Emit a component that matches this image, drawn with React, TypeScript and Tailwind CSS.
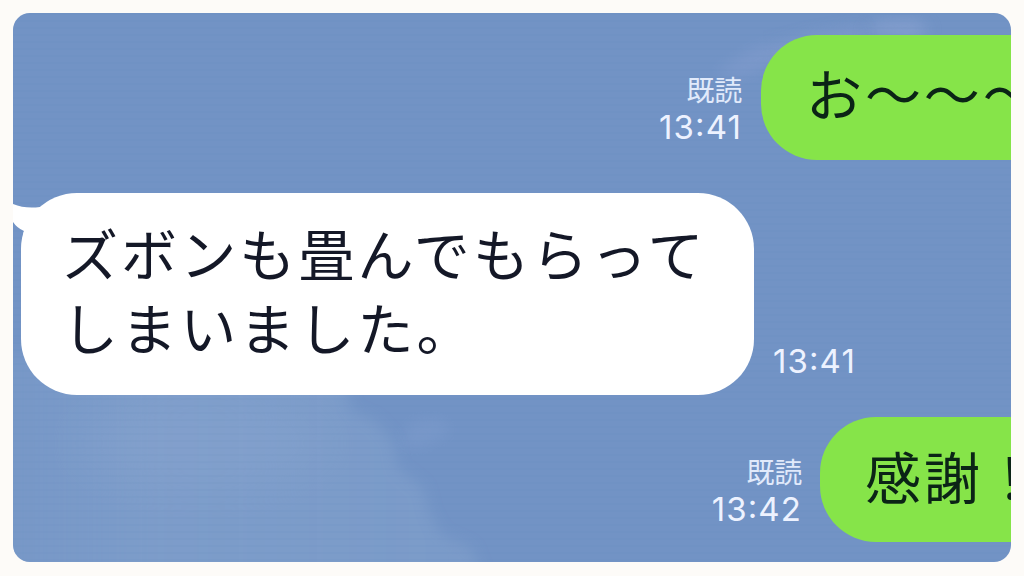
import type { ReactNode } from 'react';

const jp = "font-['Noto_Sans_CJK_JP',sans-serif]";

function Clouds() {
  return (
    <svg className="absolute inset-0 h-full w-full" viewBox="0 0 998 549" preserveAspectRatio="none" aria-hidden="true">
      <defs>
        <filter id="soft" x="-20%" y="-20%" width="140%" height="140%">
          <feGaussianBlur stdDeviation="7" />
        </filter>
        <filter id="softer" x="-40%" y="-60%" width="180%" height="220%">
          <feGaussianBlur stdDeviation="26" />
        </filter>
        <linearGradient id="haze" x1="0" y1="0" x2="1" y2="0">
          <stop offset="0" stopColor="#84a3cd" stopOpacity="0.2" />
          <stop offset="0.35" stopColor="#84a3cd" stopOpacity="0.6" />
          <stop offset="1" stopColor="#84a3cd" stopOpacity="0.5" />
        </linearGradient>
        <pattern id="lines" width="200" height="7" patternUnits="userSpaceOnUse">
          <rect width="200" height="2" fill="#6488c0" opacity="0.1" />
        </pattern>
      </defs>
      <path d="M-40 340H325L338 398L362 408L380 428L384 455L410 475L416 500L428 522L458 535L475 580H-40Z" fill="url(#haze)" filter="url(#soft)" />
      <ellipse cx="190" cy="430" rx="130" ry="45" fill="#8fa8d2" opacity="0.3" filter="url(#softer)" />
      <path d="M388 425L400 408L425 405L440 418L415 432L395 436Z" fill="#84a0d0" opacity="0.35" filter="url(#soft)" />
      <path d="M850 20L865 8L900 6L918 16L900 26Z" fill="#8fa6d4" opacity="0.55" filter="url(#soft)" />
      <path d="M700 60L740 35L800 20L850 12L850 30L800 36L730 64Z" fill="#879fd0" opacity="0.45" filter="url(#soft)" />
      <rect width="998" height="549" fill="url(#lines)" />
    </svg>
  );
}

function Stamp({ time, read = false }: { time: string; read?: boolean }) {
  return (
    <div className="flex flex-col items-end whitespace-nowrap text-[#edf2ff]">
      {read && <span className={`${jp} text-[28px] leading-[38px] tracking-[-0.3px] text-[#e1eafb]`}>既読</span>}
      <span className="font-['Inter',sans-serif] text-[33px] leading-[38px] tracking-[1.1px] [font-feature-settings:'case']">{time}</span>
    </div>
  );
}

function SentBubble({ children }: { children: ReactNode }) {
  return (
    <div className={`${jp} flex h-[125px] w-[420px] shrink-0 items-start rounded-[56px] bg-[#86e449] pl-[45px] pt-[20px] text-[56px] leading-[74px] tracking-[2.9px] whitespace-nowrap text-[#0b2416]`}>
      {children}
    </div>
  );
}

export default function App() {
  return (
    <div className="h-[576px] w-[1024px] overflow-hidden bg-[#fdfbf8] p-[13px]">
      <main className="relative isolate flex h-[549px] w-[998px] flex-col overflow-hidden rounded-[17px] bg-[#7293c5] pt-[22px]">
        <div className="absolute inset-0 -z-10">
          <Clouds />
        </div>

        <div className="flex h-[125px] items-end">
          <div className="flex w-[748px] shrink-0 justify-end pr-[19px] pb-[14px]">
            <Stamp time="13:41" read />
          </div>
          <SentBubble>お〜〜〜</SentBubble>
        </div>

        <div className="mt-[33px] flex h-[202px] items-end pl-2">
          <div className={`${jp} relative h-[202px] w-[733px] rounded-[56px] bg-white pl-[41px] pt-[22px] text-[56px] leading-[74px] tracking-[3.1px] whitespace-nowrap text-[#141827]`}>
            <svg className="absolute top-0 -left-2 h-[60px] w-[50px]" viewBox="0 0 50 60" aria-hidden="true">
              <path d="M0 11Q12 16 27 14L45 8V60H8Q9 46 11 38Q4 35 0 29Z" fill="#fff" />
            </svg>
            <p className="relative">
              ズボンも畳んでもらって
              <br />
              しまいました。
            </p>
          </div>
          <div className="pb-[15px] pl-[19px]">
            <Stamp time="13:41" />
          </div>
        </div>

        <div className="mt-[22px] flex h-[125px] items-end">
          <div className="flex w-[807px] shrink-0 justify-end pr-[18px] pb-[14px]">
            <Stamp time="13:42" read />
          </div>
          <SentBubble>
            <span className="pt-px">感謝！</span>
          </SentBubble>
        </div>
      </main>
    </div>
  );
}
